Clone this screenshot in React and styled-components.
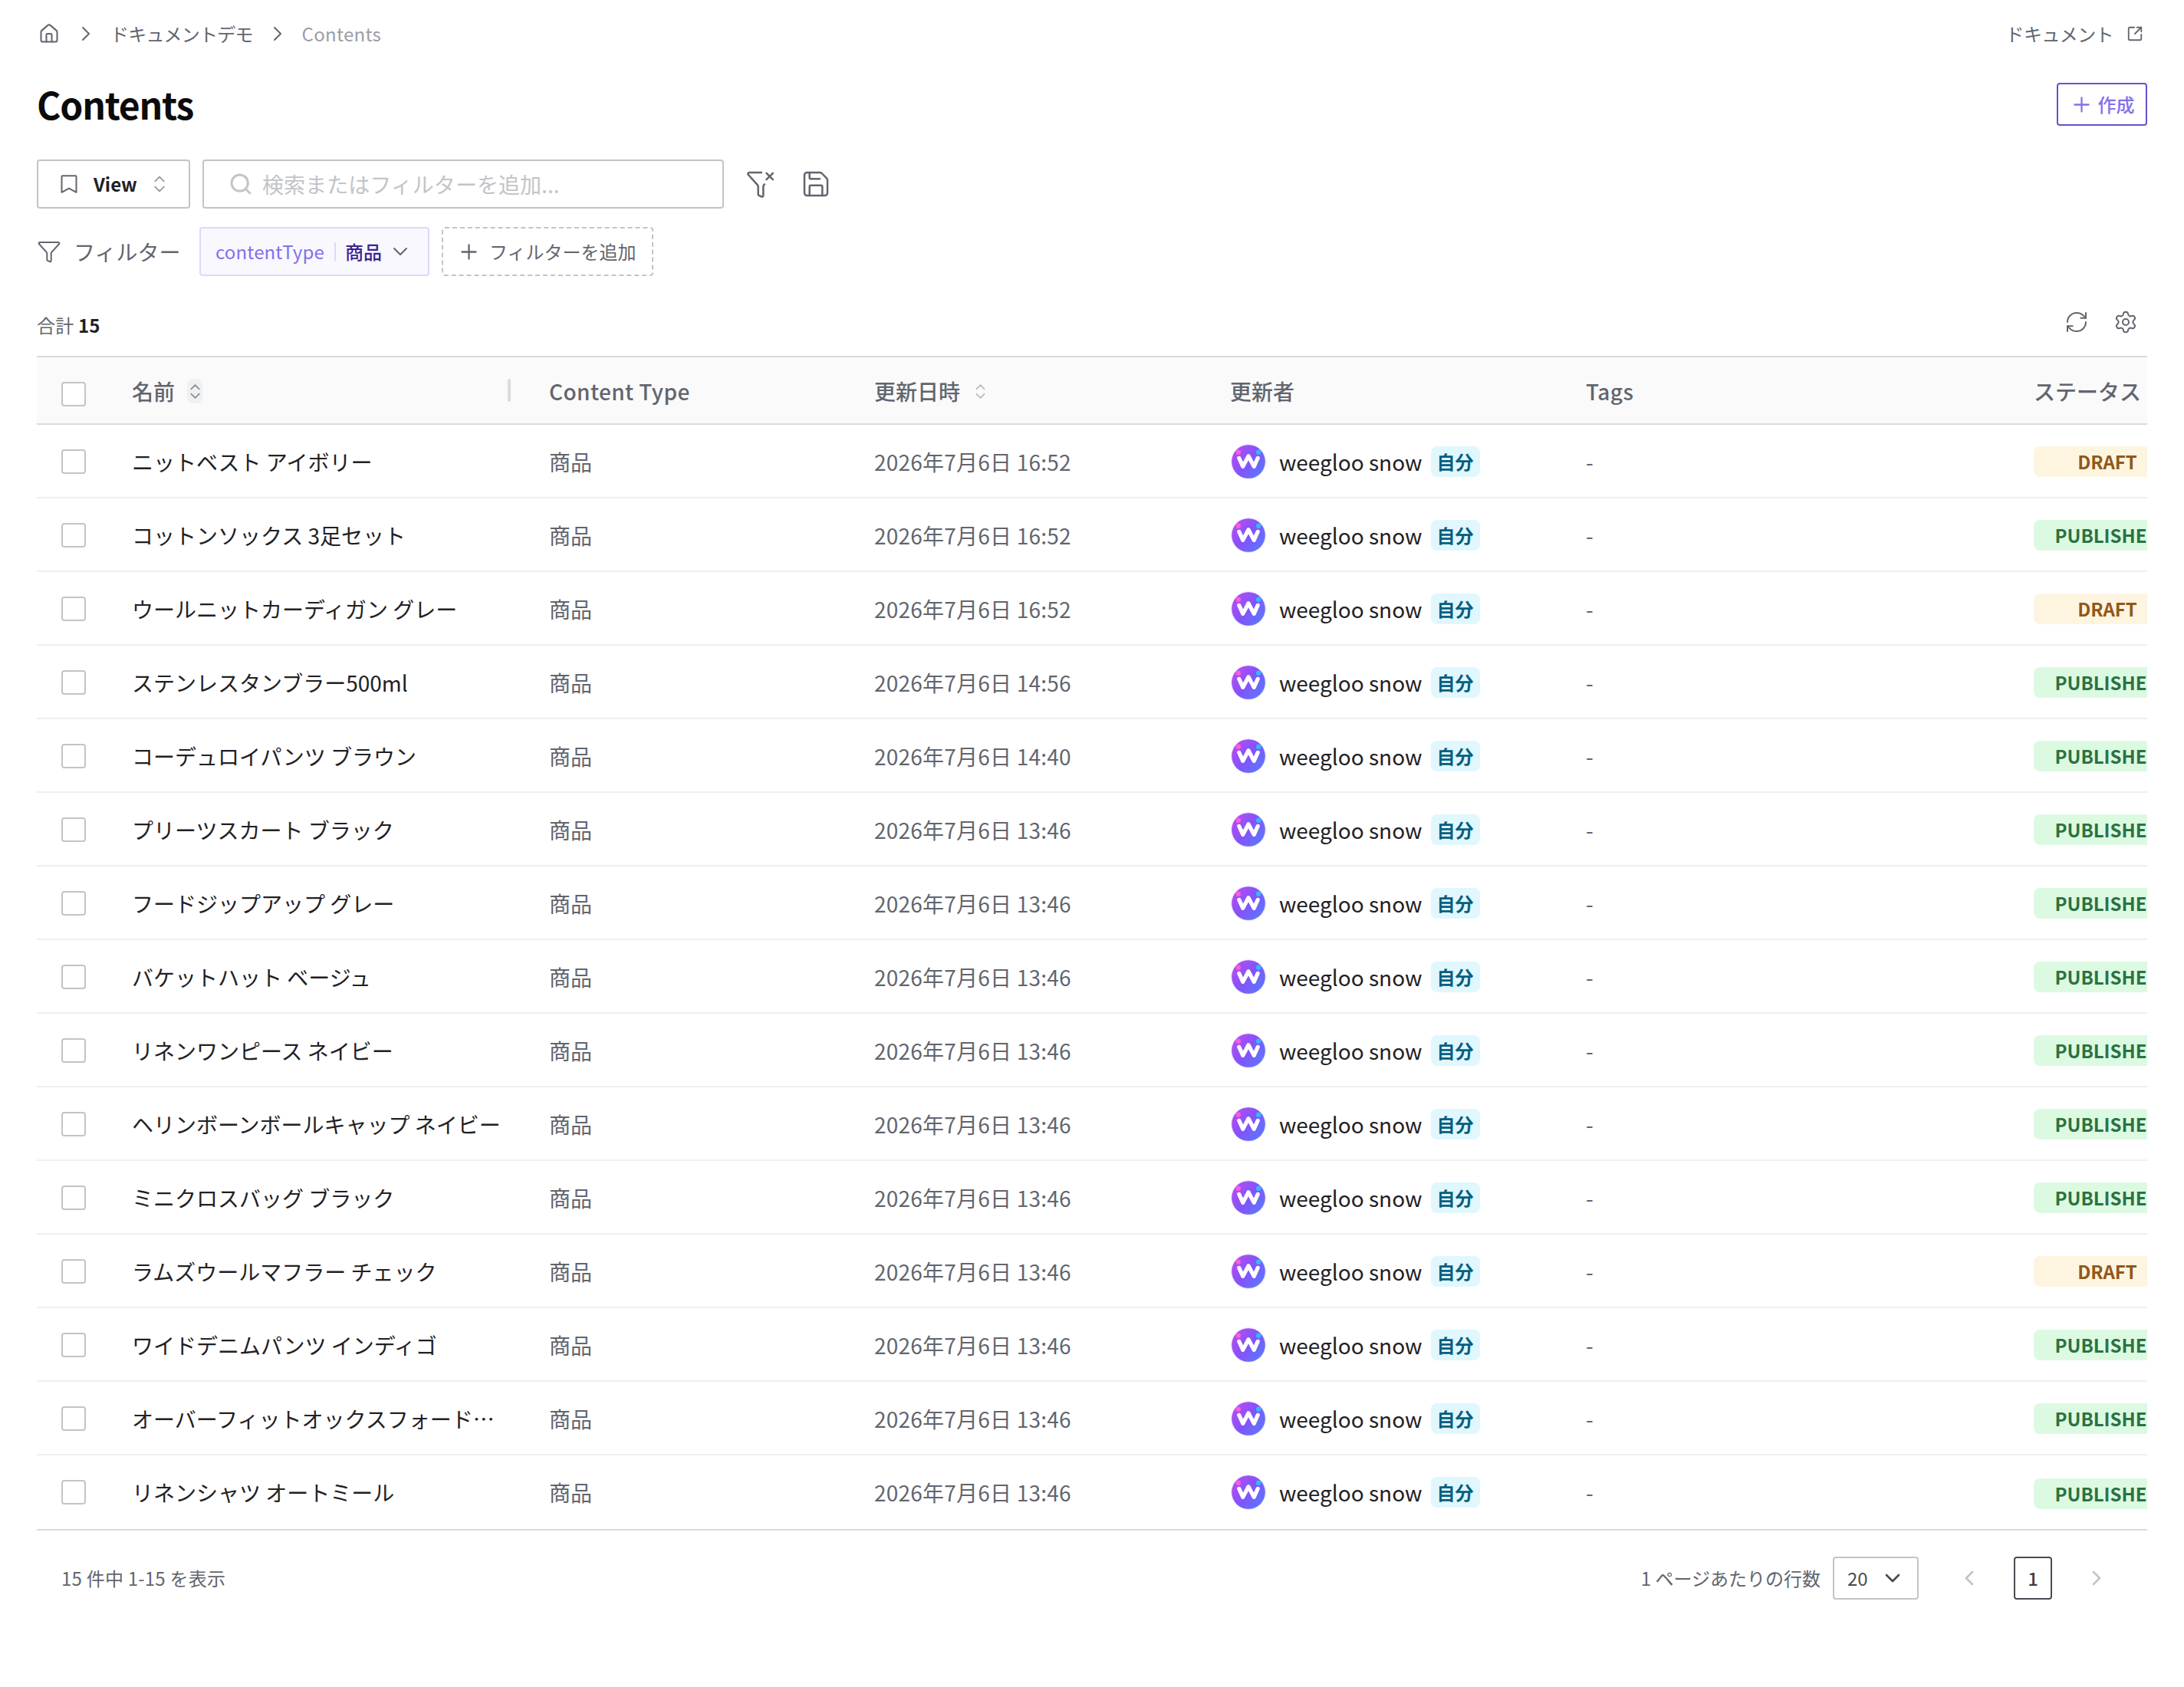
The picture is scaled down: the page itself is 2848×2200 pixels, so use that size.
import React from 'react';
import styled, { createGlobalStyle, css } from 'styled-components';
import {
	ChevronDown,
	ChevronLeft,
	ChevronRight,
	ChevronsUpDown,
	Funnel,
	FunnelX,
	House,
	Plus,
	RefreshCw,
	Save,
	Search,
	Settings,
	SquareArrowOutUpRight,
} from 'lucide-react';

const colors = {
	text: '#1f2124',
	title: '#0b0b0c',
	sub: '#62656e',
	muted: '#9b9ea4',
	placeholder: '#c2c4c8',
	border: '#c2c4c7',
	line: '#dadbdc',
	rowLine: '#eeeff0',
	headBg: '#fafafa',
	primary: '#8470ea',
	primaryStrong: '#6950cc',
	primaryDark: '#3d2291',
	primaryLine: '#dcdafa',
	primaryBg: '#f8f8fe',
};

const GlobalStyle = createGlobalStyle`
	* {
		box-sizing: border-box;
	}

	body {
		margin: 0;
		background: #ffffff;
		color: ${colors.text};
		font-family: 'Noto Sans CJK JP', 'Noto Sans', sans-serif;
		font-size: 28px;
		line-height: 40px;
	}

	button {
		font: inherit;
		color: inherit;
		background: none;
		border: 0;
		padding: 0;
		margin: 0;
	}

	svg {
		display: block;
		flex: none;
	}
`;

const Page = styled.main`
	width: 2848px;
	min-height: 2200px;
	padding: 0 48px;
`;

const TopBar = styled.header`
	height: 88px;
	display: flex;
	align-items: center;
	justify-content: space-between;
	font-size: 24px;
	color: ${colors.sub};
`;

const Breadcrumb = styled.nav`
	display: flex;
	align-items: center;
	gap: 15px;
	padding-left: 2px;
`;

const HomeLink = styled.a`
	margin-right: 3px;
`;

const Crumb = styled.span`
	color: ${({ $current }) => ($current ? colors.muted : colors.sub)};
	letter-spacing: ${({ $current }) => ($current ? '0.3px' : '-0.8px')};
	padding: 0 1px;
`;

const DocLink = styled.a`
	display: flex;
	align-items: center;
	gap: 17px;
	padding-right: 5px;
	letter-spacing: -0.6px;
`;

const TitleRow = styled.div`
	height: 96px;
	display: flex;
	align-items: center;
	justify-content: space-between;
`;

const Title = styled.h1`
	margin: 0;
	padding-bottom: 2px;
	font-size: 48px;
	line-height: 64px;
	font-weight: 700;
	letter-spacing: -0.025em;
	color: ${colors.title};
`;

const CreateButton = styled.button`
	height: 56px;
	width: 118px;
	display: flex;
	align-items: center;
	justify-content: center;
	gap: 6px;
	border: 2px solid ${colors.primaryStrong};
	border-radius: 4px;
	color: ${colors.primary};
	font-size: 24px;
	font-weight: 500;
`;

const Toolbar = styled.div`
	display: flex;
	align-items: center;
	margin-top: 24px;
`;

const box = css`
	height: 64px;
	display: flex;
	align-items: center;
	border: 2px solid ${colors.border};
	border-radius: 4px;
`;

const ViewButton = styled.button`
	${box}
	width: 200px;
	padding: 0 24px 0 24px;
	color: ${colors.sub};
`;

const ViewLabel = styled.span`
	flex: 1;
	padding-left: 16px;
	text-align: left;
	font-size: 24px;
	font-weight: 700;
	color: ${colors.text};
`;

const SearchBox = styled.div`
	${box}
	width: 680px;
	margin: 0 28px 0 16px;
	padding-left: 32px;
	gap: 12px;
	color: ${colors.placeholder};
	letter-spacing: 0.05px;
`;

const IconButton = styled.button`
	display: flex;
	color: ${colors.sub};
	margin-right: 32px;
`;

const FilterRow = styled.div`
	display: flex;
	align-items: center;
	margin-top: 24px;
	color: ${colors.sub};
`;

const FilterTitle = styled.span`
	width: 180px;
	padding-left: 16px;
`;

const FilterChip = styled.div`
	${box}
	width: 300px;
	padding: 0 20px 0 19px;
	background: ${colors.primaryBg};
	border-color: ${colors.primaryLine};
	font-size: 24px;
	color: ${colors.primary};
`;

const ChipKey = styled.span`
	letter-spacing: 0.15px;
`;

const ChipDivider = styled.i`
	width: 2px;
	height: 24px;
	margin: 0 12px 0 auto;
	background: ${colors.primaryLine};
`;

const ChipValue = styled.span`
	color: ${colors.primaryDark};
	font-weight: 500;
	margin-right: 8px;
`;

const AddFilter = styled.button`
	${box}
	width: 276px;
	margin-left: 16px;
	padding-left: 18px;
	gap: 11px;
	border-style: dashed;
	font-size: 24px;
`;

const SummaryRow = styled.div`
	height: 104px;
	display: flex;
	align-items: center;
	justify-content: space-between;
	padding-top: 16px;
`;

const Total = styled.div`
	padding-top: 8px;
	font-size: 24px;
	letter-spacing: 0.2px;
	color: ${colors.sub};

	b {
		color: ${colors.text};
		font-weight: 700;
	}
`;

const TableActions = styled.div`
	display: flex;
	gap: 32px;
	padding-right: 12px;
	color: ${colors.sub};
`;

const Table = styled.section`
	overflow: hidden;
	border-bottom: 2px solid ${colors.line};
`;

const gridRow = css`
	display: grid;
	grid-template-columns: 100px 544px 424px 464px 464px 584px 240px;
	width: 2820px;
`;

const HeadRow = styled.div`
	${gridRow}
	height: 90px;
	background: ${colors.headBg};
	border-top: 2px solid ${colors.line};
	border-bottom: 2px solid ${colors.line};
	color: ${colors.sub};
	font-weight: 500;
`;

const HeadCell = styled.div`
	display: flex;
	align-items: center;
	gap: 16px;
	padding: 2px 24px 0;
	letter-spacing: ${({ $latin }) => ($latin ? '0.4px' : 'normal')};
`;

const HeadCheckCell = styled(HeadCell)`
	padding: 10px 24px 0 32px;
`;

const SortMark = styled.span`
	width: 20px;
	height: 32px;
	display: flex;
	align-items: center;
	justify-content: center;
	border-radius: 8px;
	background: ${({ $active }) => ($active ? '#eff0f1' : 'transparent')};
	color: ${({ $active }) => ($active ? '#85888e' : '#b8babd')};
`;

const Resizer = styled.i`
	width: 4px;
	height: 30px;
	margin: 0 2px 2px auto;
	border-radius: 2px;
	background: ${colors.line};
`;

const Row = styled.div`
	${gridRow}
	height: 96px;
	padding-top: 2px;
	border-bottom: 2px solid ${colors.rowLine};

	&:last-child {
		border-bottom-color: transparent;
	}
`;

const Cell = styled.div`
	display: flex;
	align-items: center;
	min-width: 0;
	padding: 0 24px;
	color: ${({ $strong }) => ($strong ? colors.text : colors.sub)};
`;

const CheckCell = styled(Cell)`
	padding-left: 32px;
`;

const DateCell = styled(Cell)`
	letter-spacing: 0.22px;
`;

const UserCell = styled(Cell)`
	padding-left: 25px;
`;

const Name = styled.span`
	overflow: hidden;
	white-space: nowrap;
	text-overflow: ellipsis;
`;

const Checkbox = styled.span`
	width: 32px;
	height: 32px;
	border: 2px solid ${colors.border};
	border-radius: 4px;
	background: #ffffff;
`;

const UserName = styled.span`
	margin: 0 11px 0 17px;
`;

const MeBadge = styled.span`
	width: 64px;
	height: 40px;
	border-radius: 8px;
	background: #e0f7fe;
	color: #075f80;
	font-size: 24px;
	font-weight: 700;
	text-align: center;
`;

const StatusBadge = styled.span`
	flex: none;
	width: 192px;
	height: 40px;
	border-radius: 8px;
	font-size: 24px;
	font-weight: 700;
	text-align: center;
	background: ${({ $draft }) => ($draft ? '#fef5e1' : '#dcfae2')};
	color: ${({ $draft }) => ($draft ? '#935717' : '#2a7243')};

	${Row}:last-child & {
		margin-top: 4px;
	}
`;

const Pagination = styled.footer`
	height: 124px;
	display: flex;
	align-items: center;
	padding: 0 50px 0 32px;
	font-size: 24px;
	color: ${colors.sub};
`;

const Range = styled.span`
	letter-spacing: 0.22px;
`;

const PerPage = styled.span`
	margin: 0 16px 0 auto;
`;

const PageSelect = styled.button`
	width: 112px;
	height: 56px;
	display: flex;
	align-items: center;
	justify-content: space-between;
	padding: 0 16px 0 17px;
	border: 2px solid ${colors.border};
	border-radius: 4px;
	color: #4a4b52;
`;

const PageNumber = styled.button`
	width: 50px;
	height: 56px;
	margin: 0 42px;
	border: 2px solid #4a4b52;
	border-radius: 4px;
	color: #3f4046;
	font-weight: 500;
`;

const PageArrow = styled.button`
	color: ${colors.placeholder};
	margin-left: ${({ $first }) => ($first ? '50px' : '0')};
`;

const BookmarkIcon = () => (
	<svg width="32" height="32" viewBox="0 0 32 32" fill="none" stroke="currentColor" strokeWidth="2" strokeLinejoin="round">
		<path d="M6.5 6.2a1 1 0 0 1 1-1h17a1 1 0 0 1 1 1v20.6l-9.5-5.2-9.5 5.2z" />
	</svg>
);

const Avatar = () => (
	<svg width="46" height="46" viewBox="0 0 46 46" fill="none">
		<defs>
			<linearGradient id="avatar" x1="4" y1="8" x2="42" y2="38" gradientUnits="userSpaceOnUse">
				<stop offset="0" stopColor="#b44cf2" />
				<stop offset="0.5" stopColor="#8353fa" />
				<stop offset="1" stopColor="#5a78ff" />
			</linearGradient>
		</defs>
		<circle cx="23" cy="23" r="22.7" fill="#e4def9" />
		<circle cx="23" cy="23" r="21.8" fill="url(#avatar)" />
		<circle cx="9.8" cy="10.8" r="3.2" fill="#fb5be0" />
		<circle cx="36.2" cy="10.8" r="3.2" fill="#36b8fb" />
		<path d="M10.8 18.4 15.8 29.4 23 15.8 30.2 29.4 35.2 18.4" stroke="#ffffff" strokeWidth="5.2" strokeLinecap="round" strokeLinejoin="round" />
	</svg>
);

const items = [
	{ name: 'ニットベスト アイボリー', time: '16:52', draft: true },
	{ name: 'コットンソックス 3足セット', time: '16:52' },
	{ name: 'ウールニットカーディガン グレー', time: '16:52', draft: true },
	{ name: 'ステンレスタンブラー500ml', time: '14:56' },
	{ name: 'コーデュロイパンツ ブラウン', time: '14:40' },
	{ name: 'プリーツスカート ブラック', time: '13:46' },
	{ name: 'フードジップアップ グレー', time: '13:46' },
	{ name: 'バケットハット ベージュ', time: '13:46' },
	{ name: 'リネンワンピース ネイビー', time: '13:46' },
	{ name: 'ヘリンボーンボールキャップ ネイビー', time: '13:46' },
	{ name: 'ミニクロスバッグ ブラック', time: '13:46' },
	{ name: 'ラムズウールマフラー チェック', time: '13:46', draft: true },
	{ name: 'ワイドデニムパンツ インディゴ', time: '13:46' },
	{ name: 'オーバーフィットオックスフォードシャツ', time: '13:46' },
	{ name: 'リネンシャツ オートミール', time: '13:46' },
];

const ContentRow = ({ item }) => (
	<Row>
		<CheckCell>
			<Checkbox />
		</CheckCell>
		<Cell $strong>
			<Name>{item.name}</Name>
		</Cell>
		<Cell>商品</Cell>
		<DateCell>2026年7月6日 {item.time}</DateCell>
		<UserCell $strong>
			<Avatar />
			<UserName>weegloo snow</UserName>
			<MeBadge>自分</MeBadge>
		</UserCell>
		<Cell>-</Cell>
		<Cell>
			<StatusBadge $draft={item.draft}>{item.draft ? 'DRAFT' : 'PUBLISHED'}</StatusBadge>
		</Cell>
	</Row>
);

export default function App() {
	return (
		<>
			<GlobalStyle />
			<Page>
				<TopBar>
					<Breadcrumb>
						<HomeLink>
							<House size={28} strokeWidth={1.75} />
						</HomeLink>
						<ChevronRight size={32} strokeWidth={1.5} />
						<Crumb>ドキュメントデモ</Crumb>
						<ChevronRight size={32} strokeWidth={1.5} />
						<Crumb $current>Contents</Crumb>
					</Breadcrumb>
					<DocLink>
						ドキュメント
						<SquareArrowOutUpRight size={22} strokeWidth={2} />
					</DocLink>
				</TopBar>
				<TitleRow>
					<Title>Contents</Title>
					<CreateButton>
						<Plus size={31} strokeWidth={1.75} />
						作成
					</CreateButton>
				</TitleRow>
				<Toolbar>
					<ViewButton>
						<BookmarkIcon />
						<ViewLabel>View</ViewLabel>
						<ChevronsUpDown size={28} strokeWidth={1.5} color="#8f9297" />
					</ViewButton>
					<SearchBox>
						<Search size={32} strokeWidth={2.2} />
						検索またはフィルターを追加...
					</SearchBox>
					<IconButton>
						<FunnelX size={40} strokeWidth={1.5} />
					</IconButton>
					<IconButton>
						<Save size={40} strokeWidth={1.5} />
					</IconButton>
				</Toolbar>
				<FilterRow>
					<Funnel size={32} strokeWidth={1.5} />
					<FilterTitle>フィルター</FilterTitle>
					<FilterChip>
						<ChipKey>contentType</ChipKey>
						<ChipDivider />
						<ChipValue>商品</ChipValue>
						<ChevronDown size={32} strokeWidth={1.5} color={colors.sub} />
					</FilterChip>
					<AddFilter>
						<Plus size={31} strokeWidth={1.75} />
						フィルターを追加
					</AddFilter>
				</FilterRow>
				<SummaryRow>
					<Total>
						合計 <b>15</b>
					</Total>
					<TableActions>
						<RefreshCw size={32} strokeWidth={1.5} />
						<Settings size={32} strokeWidth={1.5} />
					</TableActions>
				</SummaryRow>
				<Table>
					<HeadRow>
						<HeadCheckCell>
							<Checkbox />
						</HeadCheckCell>
						<HeadCell>
							名前
							<SortMark $active>
								<ChevronsUpDown size={25} strokeWidth={1.5} />
							</SortMark>
							<Resizer />
						</HeadCell>
						<HeadCell $latin>Content Type</HeadCell>
						<HeadCell>
							更新日時
							<SortMark>
								<ChevronsUpDown size={25} strokeWidth={1.5} />
							</SortMark>
						</HeadCell>
						<HeadCell>更新者</HeadCell>
						<HeadCell $latin>Tags</HeadCell>
						<HeadCell>ステータス</HeadCell>
					</HeadRow>
					<div>
						{items.map((item) => (
							<ContentRow key={item.name} item={item} />
						))}
					</div>
				</Table>
				<Pagination>
					<Range>15 件中 1-15 を表示</Range>
					<PerPage>1 ページあたりの行数</PerPage>
					<PageSelect>
						20
						<ChevronDown size={32} strokeWidth={2} />
					</PageSelect>
					<PageArrow $first>
						<ChevronLeft size={32} strokeWidth={2} />
					</PageArrow>
					<PageNumber>1</PageNumber>
					<PageArrow>
						<ChevronRight size={32} strokeWidth={2} />
					</PageArrow>
				</Pagination>
			</Page>
		</>
	);
}
